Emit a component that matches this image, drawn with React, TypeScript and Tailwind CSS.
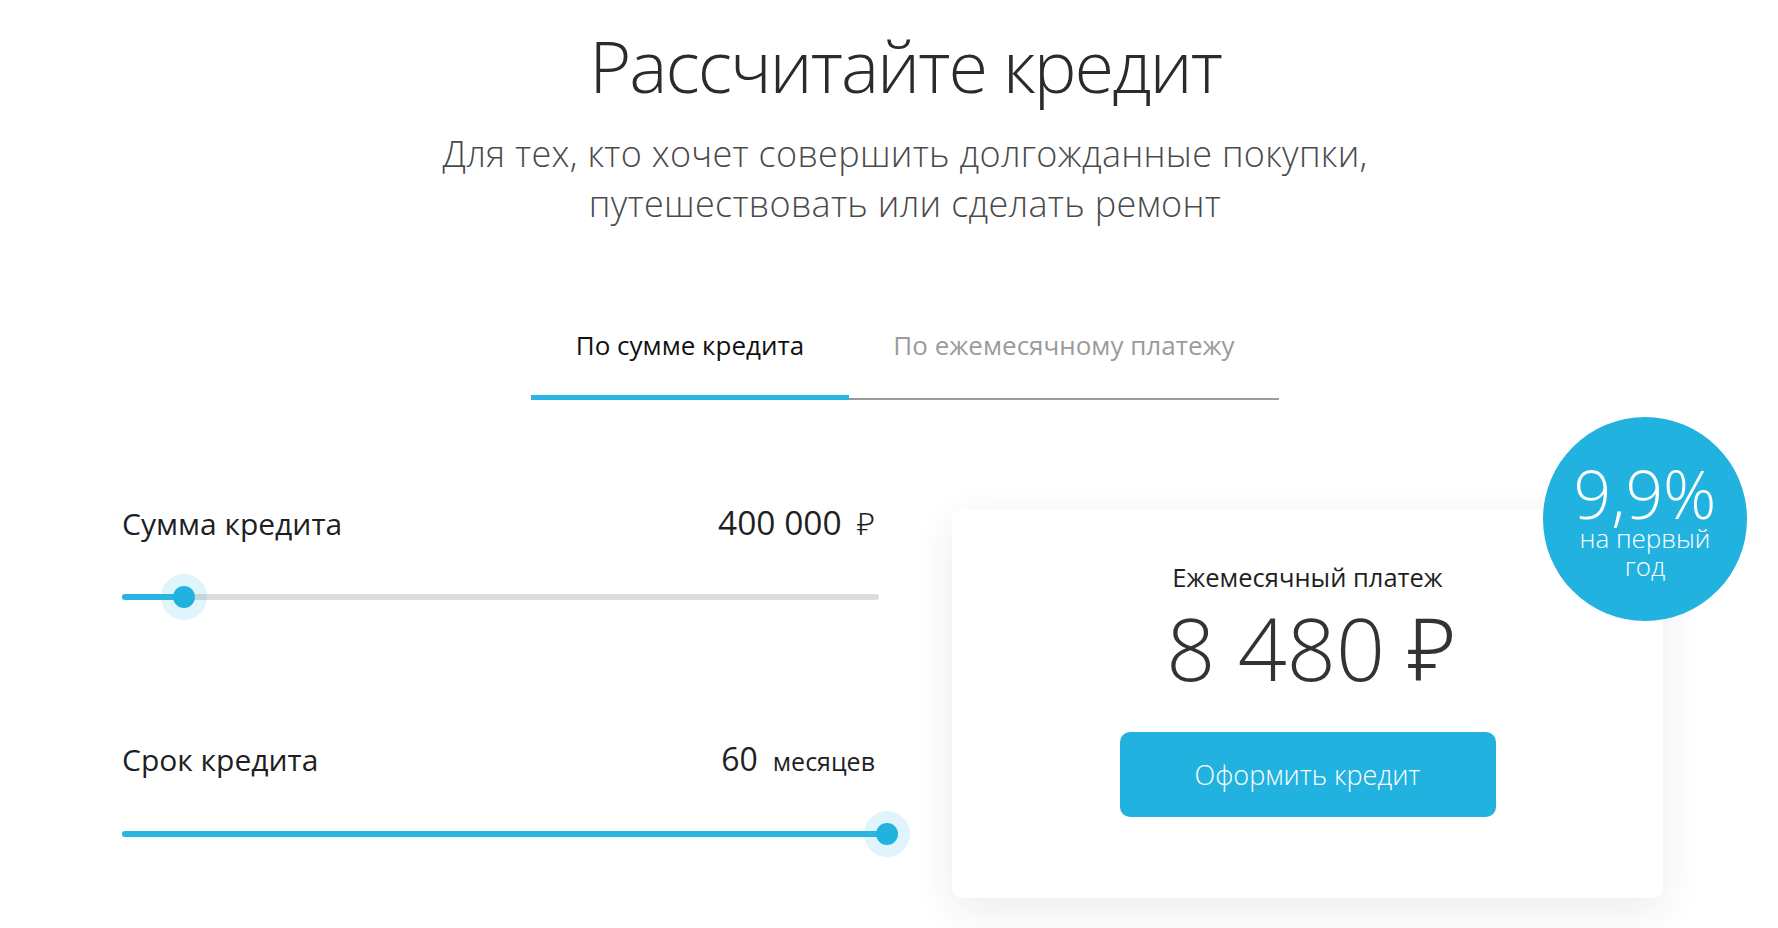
import { useState } from "react";

const font = { fontFamily: '"Open Sans", "Noto Sans", sans-serif' };

// ширина хода бегунка, px
const THUMB_RANGE = 765;

interface SliderRowProps {
  label: string;
  value: string;
  unit: string;
  unitSmall?: boolean;
  ratio: number;
}

function SliderRow({ label, value, unit, unitSmall, ratio }: SliderRowProps) {
  const pos = Math.round(THUMB_RANGE * ratio);
  return (
    <div className="w-full">
      <div className="flex items-baseline justify-between pr-[4px] text-[#1f1f1f]">
        <span className="text-[30px] leading-[40px]">{label}</span>
        <span className="flex items-baseline gap-[15px]">
          <span className={unitSmall ? "text-[32px] leading-[40px]" : "text-[33.5px] leading-[40px]"}>{value}</span>
          <span className={unitSmall ? "text-[25px]" : "text-[32px] font-light leading-[40px]"}>{unit}</span>
        </span>
      </div>
      <div className="relative mt-[50px] h-[6px] rounded-full bg-[#dcdcdc]">
        <div
          className="h-full rounded-full bg-[#29b5e1]"
          style={{ width: Math.min(pos, 757) }}
        />
        <div
          className="absolute top-1/2 flex h-[46px] w-[46px] -translate-x-1/2 -translate-y-1/2 items-center justify-center rounded-full bg-[#29b5e1]/15"
          style={{ left: pos }}
        >
          <div className="h-[22px] w-[22px] rounded-full bg-[#22b2e0]" />
        </div>
      </div>
    </div>
  );
}

export default function App() {
  const [tab, setTab] = useState(0);

  const tabClass = (active: boolean) =>
    active
      ? "border-b-[5px] border-[#29b5e1] pb-[30px] text-[#111]"
      : "border-b-2 border-[#9b9b9b] pb-[33px] text-[#9b9b9b]";

  return (
    <div className="min-h-[928px] w-full bg-white" style={font}>
      <div className="ml-[122px] w-[1566px]">
        {/* Заголовок */}
        <div className="flex flex-col items-center pt-[15px] text-center">
          <h1 className="text-[72px] font-light leading-[100px] tracking-[-2px] text-[#2b2b2b]">
            Рассчитайте кредит
          </h1>
          <p className="mt-[14px] text-[36px] font-light leading-[50px] tracking-[0.3px] text-[#4a4a4a]">
            Для тех, кто хочет совершить долгожданные покупки,
            <br />
            путешествовать или сделать ремонт
          </p>
        </div>

        {/* Вкладки */}
        <div className="mt-[97px] flex justify-center">
          <div className="flex items-end">
            <button
              type="button"
              onClick={() => setTab(0)}
              className={`w-[318px] text-[26px] ${tabClass(tab === 0)}`}
            >
              По сумме кредита
            </button>
            <button
              type="button"
              onClick={() => setTab(1)}
              className={`w-[430px] text-[26px] ${tabClass(tab === 1)}`}
            >
              По ежемесячному платежу
            </button>
          </div>
        </div>

        {/* Калькулятор */}
        <div className="mt-[50px] flex items-start">
          <div className="flex w-[757px] flex-col gap-[139px] pt-[52px]">
            <SliderRow label="Сумма кредита" value="400 000" unit="₽" ratio={0.081} />
            <SliderRow label="Срок кредита" value="60" unit="месяцев" unitSmall ratio={1} />
          </div>

          <div className="relative ml-[73px] mt-[59px] flex h-[389px] w-[711px] flex-col items-center rounded-[10px] bg-white shadow-[0_12px_40px_rgba(30,40,80,0.09)]">
            <div className="mt-[49px] text-[25.5px] text-[#1f1f1f]">Ежемесячный платеж</div>
            <div className="mt-[2px] pl-[8px] text-[86px] font-light leading-[100px] text-[#333]">8 480 ₽</div>
            <button
              type="button"
              className="mt-[34px] h-[85px] w-[376px] rounded-[10px] bg-[#22b2e0] text-[27px] font-light text-white"
            >
              Оформить кредит
            </button>

            <div className="absolute left-[591px] top-[-92px] flex h-[204px] w-[204px] flex-col items-center justify-center rounded-full bg-[#22b2e0] pt-[4px] text-center text-white">
              <div className="text-[66px] font-light leading-[62px]">9,9%</div>
              <div className="text-[26px] font-light leading-[28px]">
                на первый
                <br />
                год
              </div>
            </div>
          </div>
        </div>
      </div>
    </div>
  );
}
